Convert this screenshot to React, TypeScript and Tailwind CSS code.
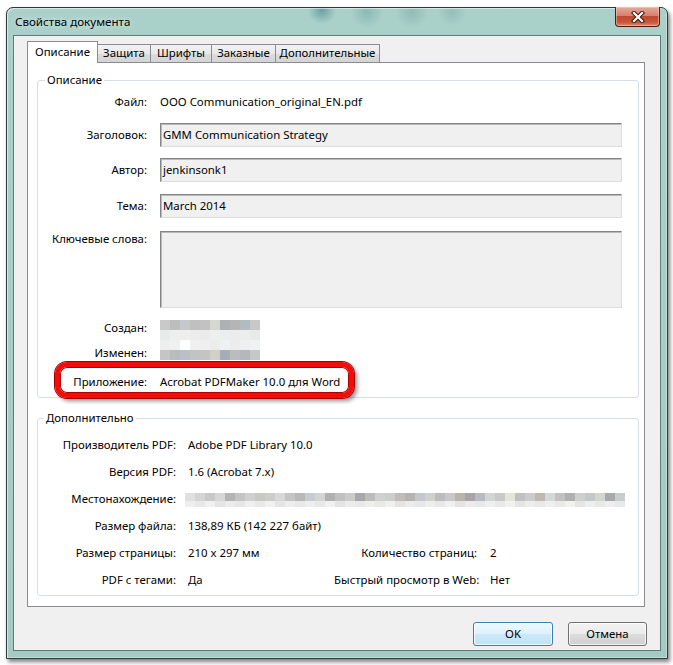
import clsx from "clsx";
import type { ReactNode } from "react";

const TABS = [
  { label: "Описание", width: "w-[71px]", active: true },
  { label: "Защита", width: "w-[54px]", active: false },
  { label: "Шрифты", width: "w-[62px]", active: false },
  { label: "Заказные", width: "w-[65px]", active: false },
  { label: "Дополнительные", width: "w-[105px]", active: false },
];

// blurred (pixelated) dates: 4 rows x 10 blocks
const DATE_MOSAIC = [
  ["bg-[#c9c9c9]", "bg-[#bdbdbd]", "bg-[#c6c8cb]", "bg-[#c0c0c0]", "bg-[#c2c2c2]", "bg-[#d6d6d2]", "bg-[#adb1b4]", "bg-[#b4b5b6]", "bg-[#b2bcc0]", "bg-[#c8c8c8]"],
  ["bg-[#e9ebeb]", "bg-[#eef0f0]", "bg-[#eeeeee]", "bg-[#ececec]", "bg-[#ebebeb]", "bg-[#eef0f0]", "bg-[#eaeef0]", "bg-[#ececec]", "bg-[#eceeee]", "bg-[#e8eaea]"],
  ["bg-[#eeeeee]", "bg-[#f0f0f0]", "bg-[#ffffff]", "bg-[#f0f0f0]", "bg-[#efefef]", "bg-[#ececec]", "bg-[#eff0f0]", "bg-[#ececec]", "bg-[#eef0f0]", "bg-[#eef2f2]"],
  ["bg-[#c5c5c5]", "bg-[#b8bcbc]", "bg-[#bcc0c4]", "bg-[#c0c4c4]", "bg-[#c4c4c4]", "bg-[#d0d0c8]", "bg-[#a8acb4]", "bg-[#bcbcbc]", "bg-[#b4b8bc]", "bg-[#c4c8c8]"],
];

// blurred location path: 2 rows x 44 blocks
const PATH_MOSAIC_TOP = [
  "bg-[#e0e0e0]", "bg-[#d4d4d4]", "bg-[#c8c8c8]", "bg-[#d6d6d6]", "bg-[#b4b4b4]", "bg-[#c4c4c4]", "bg-[#d0d0d0]", "bg-[#c8c8c4]", "bg-[#cccccc]", "bg-[#d8d8d8]", "bg-[#c4c4c5]",
  "bg-[#b8b8b8]", "bg-[#c8ccd0]", "bg-[#d4d4d5]", "bg-[#b0b0b0]", "bg-[#c0c0c0]", "bg-[#cacaca]", "bg-[#a8a8ac]", "bg-[#bcbcbc]", "bg-[#d0d0d1]", "bg-[#cdcdcd]", "bg-[#c0bcbc]",
  "bg-[#b4b4b5]", "bg-[#c4c8cc]", "bg-[#d0d0cc]", "bg-[#bcbcbd]", "bg-[#c8c8c9]", "bg-[#b8b4b0]", "bg-[#a8a4a8]", "bg-[#b8bcc0]", "bg-[#d4d4d3]", "bg-[#c9c9c9]", "bg-[#e4e4dc]",
  "bg-[#c0c0c1]", "bg-[#cbcbcb]", "bg-[#bcb8b4]", "bg-[#d4d8d8]", "bg-[#c1c1c1]", "bg-[#b0b0b1]", "bg-[#cfcfcf]", "bg-[#c4c8c8]", "bg-[#d4d4d0]", "bg-[#a9a9a9]", "bg-[#c8cccc]",
];
const PATH_MOSAIC_BOTTOM = [
  "bg-[#eeeeee]", "bg-[#e8e8e8]", "bg-[#f0f0f0]", "bg-[#e4e4e4]", "bg-[#ececec]", "bg-[#e6e8e8]", "bg-[#efefef]", "bg-[#e9e9e9]", "bg-[#f1f1f1]", "bg-[#e5e5e5]", "bg-[#ededed]",
  "bg-[#e7e9e9]", "bg-[#eeeeef]", "bg-[#e8e8e9]", "bg-[#f0f0f1]", "bg-[#e4e4e5]", "bg-[#ececed]", "bg-[#e6e8e9]", "bg-[#eeeeed]", "bg-[#e8e8e7]", "bg-[#f0f0ef]", "bg-[#e4e4e3]",
  "bg-[#ecebec]", "bg-[#e6e7e8]", "bg-[#efeeef]", "bg-[#e9e8e9]", "bg-[#f1f0f1]", "bg-[#e5e4e5]", "bg-[#edeced]", "bg-[#e7e8e9]", "bg-[#eeefee]", "bg-[#e8e9e8]", "bg-[#f0f1f0]",
  "bg-[#e4e5e4]", "bg-[#ecedec]", "bg-[#e6e9e8]", "bg-[#efefee]", "bg-[#e9e9e8]", "bg-[#f1f1f0]", "bg-[#e5e5e4]", "bg-[#edeeed]", "bg-[#e7e9e8]", "bg-[#eeeef0]", "bg-[#e8e8ea]",
];

function Label({ children, wide }: { children: ReactNode; wide?: boolean }) {
  return (
    <span className={clsx("shrink-0 text-right", wide ? "w-[138px] mr-[12px]" : "w-[109px] mr-[13px]")}>
      {children}
    </span>
  );
}

function Field({ value, tall }: { value?: string; tall?: boolean }) {
  return (
    <div
      className={clsx(
        "w-[462px] border border-[#dcdcdc] border-t-[#858585] border-l-[#858585] bg-[#f0f0f0] pl-[2px] leading-[22px] shadow-[inset_1px_1px_0_#b9b9b9]",
        tall ? "h-[77px]" : "h-[24px]"
      )}
    >
      {value}
    </div>
  );
}

function DateMosaic({ rows }: { rows: string[][] }) {
  return (
    <div className="flex flex-col">
      {rows.map((row, i) => (
        <div key={i} className="flex h-[10px]">
          {row.map((c, j) => (
            <div key={j} className={clsx("w-[10px]", c)} />
          ))}
        </div>
      ))}
    </div>
  );
}

function Tab({ label, width, active }: { label: string; width: string; active: boolean }) {
  return (
    <div
      className={clsx(
        "-ml-px first:ml-0 flex justify-center border border-[#898c95]",
        width,
        active
          ? "relative z-10 h-[22px] -mb-px border-b-0 bg-white pt-[2px] leading-[16px]"
          : "h-[18px] border-b-0 bg-[linear-gradient(to_bottom,#f3f3f3,#e8e8e8_50%,#dcdcdc_51%,#d4d4d4)] leading-[16px]"
      )}
    >
      {label}
    </div>
  );
}

function WinButton({ children, primary }: { children: ReactNode; primary?: boolean }) {
  return (
    <button
      className={clsx(
        "h-[24px] rounded-[3px] border shadow-[inset_0_0_0_1px_rgba(255,255,255,0.75)] leading-[20px]",
        primary
          ? "w-[80px] border-[#3c7fb1] bg-[linear-gradient(to_bottom,#eef8fd,#ddf1fb_50%,#cbe9f8_51%,#bfe3f6)]"
          : "w-[79px] border-[#707070] bg-[linear-gradient(to_bottom,#f2f2f2,#ebebeb_50%,#dddddd_51%,#cfcfcf)]"
      )}
    >
      {children}
    </button>
  );
}

export default function App() {
  return (
    <div className="h-[665px] w-[673px] whitespace-nowrap bg-white pl-[6px] pt-[7px] text-[11.4px] text-black font-['Noto_Sans',sans-serif]">
      {/* Window frame */}
      <div className="flex h-[652px] w-[662px] flex-col rounded-t-[7px] border border-[#2f3b3b] bg-[#a5ccc5] px-[6px] pb-[7px] shadow-[2px_3px_4px_rgba(0,0,0,0.5),inset_1px_1px_0_rgba(255,255,255,0.55),inset_-1px_-1px_0_rgba(255,255,255,0.35)] bg-[radial-gradient(circle_at_315px_2px,rgba(60,120,130,0.55),transparent_14px),radial-gradient(circle_at_360px_4px,rgba(90,140,140,0.35),transparent_16px),radial-gradient(circle_at_405px_4px,rgba(90,140,140,0.3),transparent_16px),radial-gradient(circle_at_445px_4px,rgba(90,140,140,0.25),transparent_14px),linear-gradient(to_bottom,#a9d0c9,#a3cac3)]">
        {/* Title bar */}
        <div className="flex h-[27px] shrink-0 items-start justify-between">
          <span className="pl-[2px] pt-[6px] text-[11.6px] leading-[16px] [text-shadow:0_0_6px_rgba(255,255,255,0.9)]">
            Свойства документа
          </span>
          <button className="-mt-px mr-[1px] flex h-[20px] w-[45px] items-center justify-center rounded-b-[4px] border border-t-0 border-[#4a1c12] bg-[linear-gradient(to_bottom,#e8a899,#d6826f_45%,#c04a2e_50%,#c8563a_80%,#dc8a6c)] shadow-[inset_0_0_0_1px_rgba(255,220,210,0.45)]">
            <svg width="14" height="12" viewBox="0 0 14 12">
              <path d="M3 2 L11 10 M11 2 L3 10" stroke="#3b1a14" strokeWidth="4.2" strokeLinecap="square" />
              <path d="M3 2 L11 10 M11 2 L3 10" stroke="#ffffff" strokeWidth="2.2" strokeLinecap="square" />
            </svg>
          </button>
        </div>

        {/* Client area */}
        <div className="flex flex-1 flex-col border border-[#5f7c79] bg-[#f0f0f0] pt-[5px]">
          <div className="pl-[13px]">
            {/* Tabs */}
            <div className="flex h-[21px] items-end">
              {TABS.map((t) => (
                <Tab key={t.label} {...t} />
              ))}
            </div>

            {/* Tab page */}
            <div className="flex h-[545px] w-[618px] flex-col border border-[#898c95] bg-white">
              {/* Описание */}
              <fieldset className="ml-[9px] mr-[5px] mt-[9px] rounded-[3px] border border-[#d5dfe5] pb-[7px]">
                <legend className="ml-[7px] px-[2px] leading-[16px]">Описание</legend>

                <div className="mt-[6px] flex h-[16px] items-center leading-[16px]">
                  <Label>Файл:</Label>
                  <span>OOO Communication_original_EN.pdf</span>
                </div>
                <div className="mt-[13px] flex items-center">
                  <Label>Заголовок:</Label>
                  <Field value="GMM Communication Strategy" />
                </div>
                <div className="mt-[11px] flex items-center">
                  <Label>Автор:</Label>
                  <Field value="jenkinsonk1" />
                </div>
                <div className="mt-[12px] flex items-center">
                  <Label>Тема:</Label>
                  <Field value="March 2014" />
                </div>
                <div className="mt-[13px] flex items-start leading-[16px]">
                  <Label>Ключевые слова:</Label>
                  <Field tall />
                </div>
                <div className="mt-[12px] flex h-[20px] items-start leading-[16px]">
                  <Label>Создан:</Label>
                  <DateMosaic rows={DATE_MOSAIC.slice(0, 2)} />
                </div>
                <div className="flex h-[20px] items-start leading-[16px]">
                  <Label>
                    <span className="block pt-[5px]">Изменен:</span>
                  </Label>
                  <DateMosaic rows={DATE_MOSAIC.slice(2, 4)} />
                </div>
                <div className="relative mt-[14px] flex h-[16px] items-center leading-[16px]">
                  <Label>Приложение:</Label>
                  <span>Acrobat PDFMaker 10.0 для Word</span>
                  {/* red highlight drawn over the row */}
                  <div className="pointer-events-none absolute -top-[12px] left-[17px] h-[36px] w-[299px] rounded-[12px] border-[5px] border-[#f20d0d] shadow-[0_0_0_1px_#a40000,inset_0_0_0_1px_#b00000,3px_3px_4px_rgba(0,0,0,0.45)]" />
                </div>
              </fieldset>

              {/* Дополнительно */}
              <fieldset className="ml-[9px] mr-[5px] mt-[12px] rounded-[3px] border border-[#d5dfe5] pb-[2px] pt-[5px]">
                <legend className="ml-[6px] px-[2px] leading-[16px]">Дополнительно</legend>

                <div className="flex h-[27px] items-center">
                  <Label wide>Производитель PDF:</Label>
                  <span>Adobe PDF Library 10.0</span>
                </div>
                <div className="flex h-[27px] items-center">
                  <Label wide>Версия PDF:</Label>
                  <span>1.6 (Acrobat 7.x)</span>
                </div>
                <div className="flex h-[27px] items-center">
                  <Label wide>Местонахождение:</Label>
                  <div className="-ml-[3px] mt-[2px] flex flex-col">
                    <div className="flex h-[8px]">
                      {PATH_MOSAIC_TOP.map((c, i) => (
                        <div key={i} className={clsx("w-[10px]", c)} />
                      ))}
                    </div>
                    <div className="flex h-[6px]">
                      {PATH_MOSAIC_BOTTOM.map((c, i) => (
                        <div key={i} className={clsx("w-[10px]", c)} />
                      ))}
                    </div>
                  </div>
                </div>
                <div className="flex h-[27px] items-center">
                  <Label wide>Размер файла:</Label>
                  <span>138,89 КБ (142 227 байт)</span>
                </div>
                <div className="flex h-[27px] items-center">
                  <Label wide>Размер страницы:</Label>
                  <span className="w-[146px]">210 x 297 мм</span>
                  <span className="mr-[13px] w-[143px] text-right">Количество страниц:</span>
                  <span>2</span>
                </div>
                <div className="flex h-[27px] items-center">
                  <Label wide>PDF с тегами:</Label>
                  <span className="w-[146px]">Да</span>
                  <span className="mr-[13px] w-[143px] text-right">Быстрый просмотр в Web:</span>
                  <span>Нет</span>
                </div>
              </fieldset>
            </div>
          </div>

          {/* Buttons */}
          <div className="mt-[15px] flex justify-end gap-[15px] pr-[13px]">
            <WinButton primary>OK</WinButton>
            <WinButton>Отмена</WinButton>
          </div>
        </div>
      </div>
    </div>
  );
}
